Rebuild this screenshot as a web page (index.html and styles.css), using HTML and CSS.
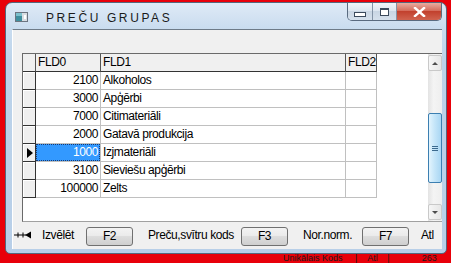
FILE: index.html
```html
<!DOCTYPE html>
<html lang="lv">
<head>
    <meta charset="UTF-8">
    <title>Preču grupas</title>
    <link rel="stylesheet" href="styles.css">
</head>
<body>
    <div class="window">
        <div class="titlebar">
            <span class="app-icon">
                <svg width="13" height="10" viewBox="0 0 13 10">
                    <rect x="0.5" y="0.5" width="12" height="9" fill="#d8dde2" stroke="#6b7480"/>
                    <rect x="1" y="1" width="6" height="8" fill="#3f8f9e"/>
                    <rect x="1" y="1" width="6" height="3" fill="#7cc0cc"/>
                    <rect x="9" y="3" width="2" height="4" fill="#ffffff"/>
                </svg>
            </span>
            <span class="title">PREČU GRUPAS</span>
            <div class="caption-buttons">
                <div class="cap-btn cap-min"><span class="min-glyph"></span></div>
                <div class="cap-btn cap-max"><span class="max-glyph"></span></div>
                <div class="cap-btn cap-close">
                    <svg width="13" height="10" viewBox="0 0 13 10">
                        <path d="M2 1 L11 9 M11 1 L2 9" stroke="#ffffff" stroke-width="2.4" stroke-linecap="square"/>
                    </svg>
                </div>
            </div>
        </div>

        <div class="client">
            <div class="top-band"></div>
            <div class="grid-box">
                <div class="grid-area">
                    <div class="grid">
                        <!-- galvene -->
                        <div class="hd ind-hd"></div>
                        <div class="hd">FLD0</div>
                        <div class="hd">FLD1</div>
                        <div class="hd">FLD2</div>

                        <div class="ind"></div><div class="cell num">2100</div><div class="cell">Alkoholos</div><div class="cell"></div>
                        <div class="ind"></div><div class="cell num">3000</div><div class="cell">Apģērbi</div><div class="cell"></div>
                        <div class="ind"></div><div class="cell num">7000</div><div class="cell">Citimateriāli</div><div class="cell"></div>
                        <div class="ind"></div><div class="cell num">2000</div><div class="cell">Gatavā produkcija</div><div class="cell"></div>
                        <div class="ind current"><span class="arrow"></span></div><div class="cell num sel"><span class="focus">1000</span></div><div class="cell">Izjmateriāli</div><div class="cell"></div>
                        <div class="ind"></div><div class="cell num">3100</div><div class="cell">Sieviešu apģērbi</div><div class="cell"></div>
                        <div class="ind"></div><div class="cell num">100000</div><div class="cell">Zelts</div><div class="cell"></div>
                    </div>
                </div>
                <div class="scrollbar">
                    <div class="sb-btn"><span class="sb-up"></span></div>
                    <div class="sb-gap-top"></div>
                    <div class="sb-thumb"><span class="grip"></span></div>
                    <div class="sb-gap"></div>
                    <div class="sb-btn"><span class="sb-down"></span></div>
                </div>
            </div>

            <div class="bar">
                <span class="nav-icon">
                    <svg width="18" height="8" viewBox="0 0 18 8">
                        <path d="M0 4 H12 M4 1.5 V6.5 M9 1.5 V6.5" stroke="#000" stroke-width="1"/>
                        <path d="M11 4 L17 0.5 V7.5 Z" fill="#000"/>
                    </svg>
                </span>
                <span class="bar-label lbl-select">Izvēlēt</span>
                <span class="key-btn">F2</span>
                <span class="bar-label lbl-code">Preču,svītru kods</span>
                <span class="key-btn">F3</span>
                <span class="bar-label lbl-norm">Nor.norm.</span>
                <span class="key-btn">F7</span>
                <span class="bar-label lbl-atl">Atl</span>
            </div>
        </div>
    </div>

    <!-- aiz loga redzamā statusa josla -->
    <div class="behind-status">
        <span class="st-kods">Unikālais Kods</span>
        <span class="st-sep">|</span>
        <span class="st-atl">Atl</span>
        <span class="st-sep">|</span>
        <span class="st-num">263</span>
    </div>
</body>
</html>
```

FILE: styles.css
```css
html, body {
margin: 0;
padding: 0;
}

body {
width: 451px;
height: 263px;
overflow: hidden;
position: relative;
background-color: #e8000a;
font-family: "Liberation Sans", Arial, sans-serif;
font-size: 12px;
letter-spacing: -0.4px;
color: #000;
}

/* logs */
.window {
position: relative;
z-index: 1;
margin: 2px 0 0 5px;
width: 442px;
height: 252px;
box-sizing: border-box;
border: 1px solid #55677c;
border-radius: 7px 7px 5px 5px;
background: linear-gradient(to bottom, #dfeaf6, #c9dcef 26px, #bcd3ea 60px, #b8cfe8);
padding: 0 4px 4px 6px;
display: flex;
flex-direction: column;
}

.titlebar {
height: 26px;
display: flex;
align-items: flex-start;
}
.app-icon { display: block; width: 13px; height: 10px; margin: 9px 0 0 3px; }
.app-icon svg { display: block; }
.title {
margin: 8px 0 0 18px;
font-size: 12px;
letter-spacing: 2.6px;
color: #1a1a1a;
line-height: 14px;
}

.caption-buttons {
margin-left: auto;
display: flex;
height: 18px;
border: 1px solid #5a6b80;
border-top: none;
border-radius: 0 0 5px 5px;
overflow: hidden;
box-sizing: border-box;
}
.cap-btn {
display: flex;
align-items: center;
justify-content: center;
height: 100%;
}
.cap-min, .cap-max {
width: 25px;
background: linear-gradient(to bottom, #f1f5fa, #dde6f0 45%, #c9d6e4 50%, #d5e0ec);
border-right: 1px solid #8393a6;
box-sizing: border-box;
}
.cap-max { width: 24px; }
.cap-close {
width: 44px;
background: linear-gradient(to bottom, #e9aca0, #d56d5c 45%, #c2412e 50%, #d0634f);
}
.cap-close svg { display: block; }
.min-glyph {
width: 10px;
height: 3px;
margin-top: 6px;
background: #fff;
border: 1px solid #3b4a5c;
}
.max-glyph {
width: 7px;
height: 5px;
background: #fff;
border: 1px solid #3b4a5c;
border-top-width: 2px;
}

/* klienta zona */
.client {
flex: 1;
background-color: #f0f0f0;
border-top: 1px solid #6e7b88;
border-left: 1px solid #ffffff;
display: flex;
flex-direction: column;
}
.top-band { height: 23px; }

.grid-box {
height: 169px;
margin-left: 9px;
box-sizing: border-box;
border-left: 1px solid #6a6a6a;
border-top: 1px solid #6a6a6a;
border-bottom: 1px solid #a0a0a0;
background-color: #fff;
display: flex;
}
.grid-area { flex: 1; }

.grid {
display: grid;
grid-template-columns: 13px 65px 245px 31px;
grid-auto-rows: 18px;
}
.grid > div {
box-sizing: border-box;
line-height: 17px;
white-space: nowrap;
overflow: hidden;
}
.hd {
background-color: #f0f0f0;
border-right: 1px solid #555;
border-bottom: 1px solid #333;
padding-left: 2px;
}
.ind-hd { padding: 0; }
.ind {
background-color: #efefef;
border-right: 1px solid #333;
border-bottom: 1px solid #333;
box-shadow: inset 1px 1px 0 #ffffff;
display: flex;
align-items: center;
justify-content: center;
}
.arrow {
width: 0;
height: 0;
border-top: 5px solid transparent;
border-bottom: 5px solid transparent;
border-left: 6px solid #000;
margin-left: 1px;
}
.cell {
border-right: 1px solid #c0c0c0;
border-bottom: 1px solid #c0c0c0;
padding-left: 2px;
}
.num { text-align: right; padding: 0 2px 0 0; }
.sel { padding: 0; }
.focus {
display: block;
height: 100%;
box-sizing: border-box;
background-color: #3399ff;
color: #fff;
border: 1px dotted #1a3a70;
padding-right: 1px;
line-height: 15px;
}

/* ritjosla */
.scrollbar {
width: 14px;
padding: 1px 0 1px;
display: flex;
flex-direction: column;
background: linear-gradient(to right, #e3e3e3, #f4f4f4 40%, #eeeeee);
}
.sb-btn {
height: 16px;
box-sizing: border-box;
border: 1px solid #c9c9c9;
border-radius: 2px;
background: linear-gradient(to right, #f6f6f6, #e6e6e6);
display: flex;
align-items: center;
justify-content: center;
}
.sb-up, .sb-down {
width: 0;
height: 0;
border-left: 3px solid transparent;
border-right: 3px solid transparent;
}
.sb-up { border-bottom: 3px solid #4d4d4d; }
.sb-down { border-top: 3px solid #4d4d4d; }
.sb-gap-top { height: 42px; }
.sb-gap { flex: 1; }
.sb-thumb {
height: 70px;
box-sizing: border-box;
border: 1px solid #3c7fb1;
border-radius: 2px;
background: linear-gradient(to right, #e3f4fd, #c6e6f9 45%, #a9d6f3);
display: flex;
align-items: center;
justify-content: center;
}
.grip {
width: 6px;
height: 5px;
background: repeating-linear-gradient(to bottom, #3c6a8e 0, #3c6a8e 1px, transparent 1px, transparent 2px);
}

/* apakšējā josla */
.bar {
flex: 1;
display: flex;
align-items: center;
padding-left: 1px;
padding-bottom: 1px;
}
.nav-icon { display: block; width: 18px; height: 8px; }
.nav-icon svg { display: block; }
.bar-label { white-space: nowrap; }
.lbl-select { margin-left: 10px; width: 44px; }
.lbl-code { margin-left: 15px; width: 93px; }
.lbl-norm { margin-left: 15px; width: 59px; }
.lbl-atl { margin-left: 12px; }
.key-btn {
width: 47px;
height: 19px;
box-sizing: border-box;
border: 1px solid #707070;
border-radius: 3px;
background: linear-gradient(to bottom, #f3f3f3, #ebebeb 45%, #dddddd 50%, #cfcfcf);
text-align: center;
line-height: 17px;
margin-top: 2px;
}

/* fons aiz loga */
.behind-status {
position: absolute;
left: 283px;
top: 254px;
display: flex;
color: #1a1a1a;
font-size: 9px;
letter-spacing: 0;
line-height: 9px;
}
.st-kods { width: 70px; }
.st-sep { margin: 0 10px 0 2px; }
.st-atl { width: 18px; }
.st-num { margin-left: 22px; }
```
